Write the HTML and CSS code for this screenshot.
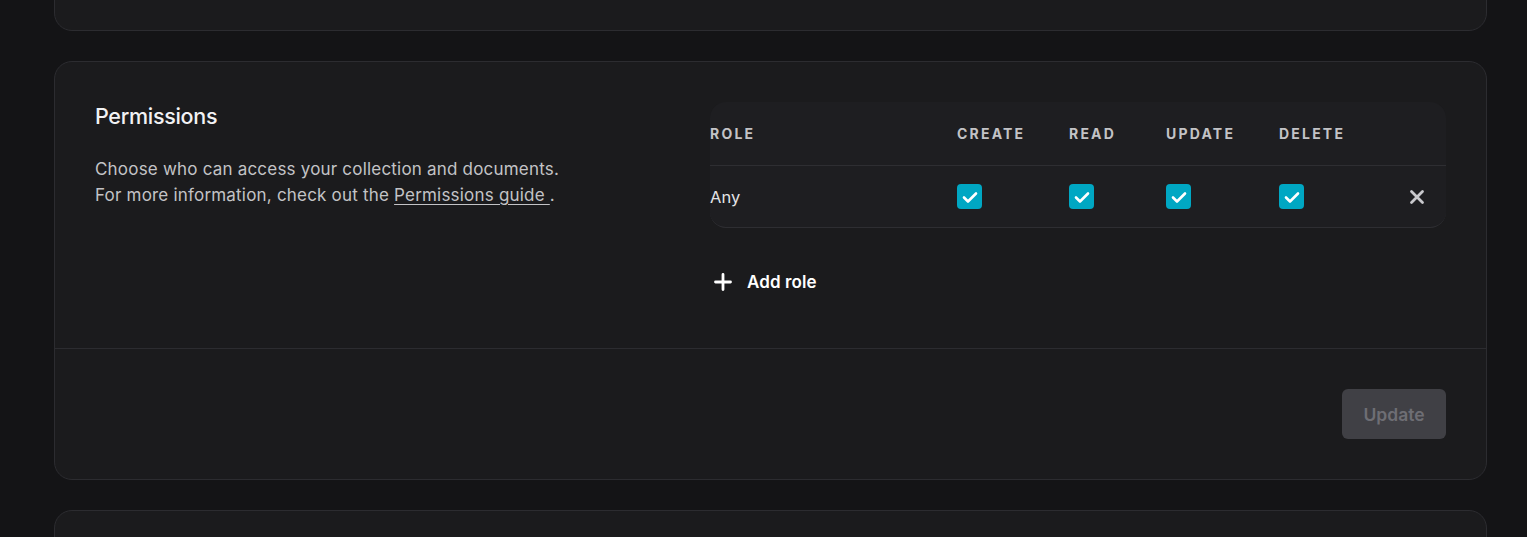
FILE: index.html
```html
<!DOCTYPE html>
<html lang="en">
<head>
<meta charset="utf-8">
<title>Permissions</title>
<link rel="stylesheet" href="styles.css">
</head>
<body>
<div class="page">
  <div class="card card-prev"></div>

  <section class="card">
    <div class="card-body">
      <div class="intro">
        <h2 class="title">Permissions</h2>
        <p class="desc">Choose who can access your collection and documents.<br>For more information, check out the <a class="link" href="#">Permissions guide </a>.</p>
      </div>
      <div class="perm">
        <div class="table">
          <div class="row head">
            <div class="cell">Role</div>
            <div class="cell">Create</div>
            <div class="cell">Read</div>
            <div class="cell">Update</div>
            <div class="cell">Delete</div>
            <div class="cell"></div>
          </div>
          <div class="row body">
            <div class="cell role">Any</div>
            <div class="cell"><span class="check"><svg viewBox="0 0 24 24" width="24" height="24"><path d="M6 12.5l4 4L18 8.5" fill="none" stroke="#fff" stroke-width="2.6" stroke-linecap="round" stroke-linejoin="round"/></svg></span></div>
            <div class="cell"><span class="check"><svg viewBox="0 0 24 24" width="24" height="24"><path d="M6 12.5l4 4L18 8.5" fill="none" stroke="#fff" stroke-width="2.6" stroke-linecap="round" stroke-linejoin="round"/></svg></span></div>
            <div class="cell"><span class="check"><svg viewBox="0 0 24 24" width="24" height="24"><path d="M6 12.5l4 4L18 8.5" fill="none" stroke="#fff" stroke-width="2.6" stroke-linecap="round" stroke-linejoin="round"/></svg></span></div>
            <div class="cell"><span class="check"><svg viewBox="0 0 24 24" width="24" height="24"><path d="M6 12.5l4 4L18 8.5" fill="none" stroke="#fff" stroke-width="2.6" stroke-linecap="round" stroke-linejoin="round"/></svg></span></div>
            <div class="cell remove"><svg viewBox="0 0 16 16" width="16" height="16"><path d="M2.5 2.5l11 11M13.5 2.5l-11 11" stroke="#c9c9cd" stroke-width="2.8" stroke-linecap="round"/></svg></div>
          </div>
        </div>
        <button class="add" type="button"><svg viewBox="0 0 20 20" width="20" height="20"><path d="M10 2.5v15M2.5 10h15" stroke="#fff" stroke-width="2.8" stroke-linecap="round"/></svg><span>Add role</span></button>
      </div>
    </div>
    <div class="card-footer">
      <button class="update" type="button" disabled>Update</button>
    </div>
  </section>

  <div class="card card-next"></div>
</div>
</body>
</html>
```

FILE: styles.css
```css
* { box-sizing: border-box; }
html, body {
  margin: 0;
  padding: 0;
  background: #141416;
  height: 537px;
  overflow: hidden;
}
body {
  font-family: Inter, "Noto Sans", sans-serif;
  color: #c3c3c6;
}
.page {
  padding: 0 40px 0 54px;
  display: flex;
  flex-direction: column;
  gap: 30px;
}
.card {
  background: #1b1b1d;
  border: 1px solid #2c2c30;
  border-radius: 18px;
  width: 1433px;
}
.card-prev {
  height: 100px;
  margin-top: -69px;
}
.card-next {
  height: 100px;
}
.card-body {
  display: flex;
  padding: 40px;
  height: 286px;
}
.intro {
  width: 615px;
  flex: none;
}
.title {
  margin: 0;
  padding-top: 1px;
  font-size: 21.5px;
  line-height: 26px;
  font-weight: 500;
  color: #f2f2f4;
  letter-spacing: -0.3px;
}
.desc {
  margin: 27px 0 0;
  font-size: 17px;
  line-height: 26px;
  letter-spacing: 0.2px;
  color: #c3c3c6;
}
.link {
  color: #c3c3c6;
  text-decoration: underline;
  text-underline-offset: 3px;
}
.perm {
  flex: 1;
  display: flex;
  flex-direction: column;
  align-items: flex-start;
}
.table {
  width: 100%;
  background: #1e1e21;
  border-radius: 16px;
  border-bottom: 1px solid #2e2e32;
}
.row {
  display: grid;
  grid-template-columns: 247px 112px 97px 113px 1fr 40px;
  align-items: center;
}
.row .cell:last-child { justify-self: end; }
.head {
  height: 64px;
  border-bottom: 1px solid #2e2e32;
}
.head .cell {
  font-size: 14px;
  font-weight: 700;
  letter-spacing: 2.2px;
  text-transform: uppercase;
  color: #c3c3c6;
}
.body {
  height: 61px;
}
.role {
  font-size: 16.5px;
  color: #e4e4e7;
}
.check {
  width: 25px;
  height: 25px;
  border-radius: 4px;
  background: #00a7c3;
  display: flex;
  align-items: center;
  justify-content: center;
}
.remove {
  display: flex;
  align-items: center;
  justify-content: center;
  width: 40px;
  padding-right: 18px;
}
.add {
  margin-top: 34px;
  height: 40px;
  background: none;
  border: 0;
  padding: 0 0 0 3px;
  display: flex;
  align-items: center;
  gap: 14px;
  font-family: Inter, "Noto Sans", sans-serif;
  font-size: 17px;
  font-weight: 600;
  letter-spacing: 0.1px;
  color: #ffffff;
  cursor: pointer;
}
.card-footer {
  border-top: 1px solid #2c2c30;
  padding: 40px;
  display: flex;
  justify-content: flex-end;
}
.update {
  width: 104px;
  height: 50px;
  border: 0;
  border-radius: 6px;
  background: #404045;
  color: #6e6e74;
  font-family: Inter, "Noto Sans", sans-serif;
  font-size: 17.5px;
  font-weight: 600;
}
```
